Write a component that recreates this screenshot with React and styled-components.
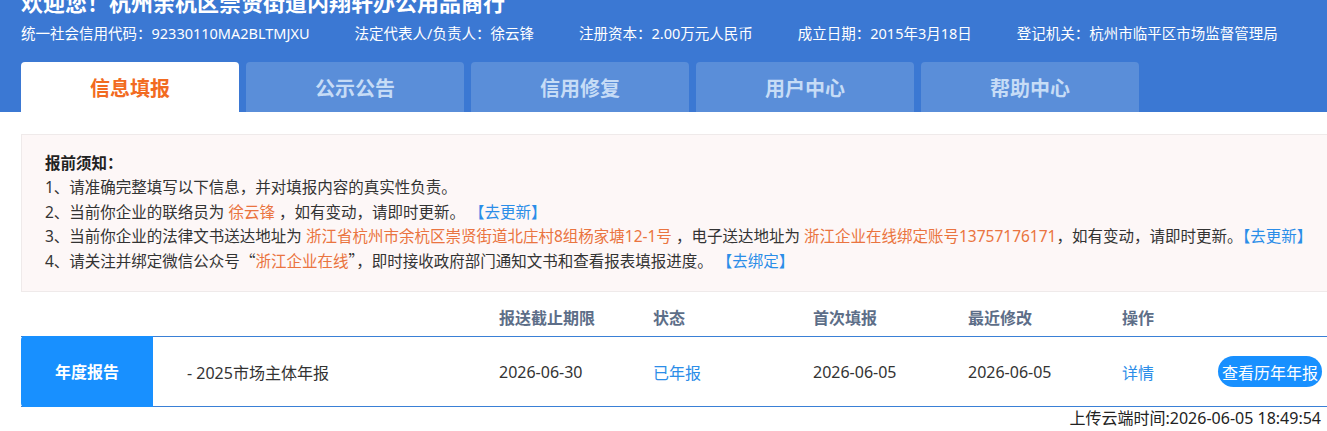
import React from 'react';
import styled, { createGlobalStyle } from 'styled-components';

const GlobalStyle = createGlobalStyle`
  html, body {
    margin: 0;
    padding: 0;
    background: #fff;
    overflow: hidden;
  }
  body {
    font-family: "Noto Sans", "Noto Sans CJK SC", sans-serif;
    font-size: 16px;
    color: #333;
  }
`;

const Header = styled.header`
  background: #3b78d3;
  padding: 0 0 0 21px;
  overflow: hidden;
`;

const Title = styled.h1`
  margin: -13px 0 0;
  font-size: 22px;
  line-height: 30px;
  font-weight: 700;
  color: #fff;
  white-space: nowrap;
`;

const InfoLine = styled.div`
  display: flex;
  gap: 45px;
  margin-top: 6px;
  line-height: 20px;
  color: #fff;
  font-size: 14.5px;
  white-space: nowrap;
`;

const Tabs = styled.nav`
  display: flex;
  gap: 7px;
  margin-top: 19px;
`;

const Tab = styled.div`
  width: 218px;
  height: 50px;
  display: flex;
  align-items: center;
  justify-content: center;
  border-radius: 4px 4px 0 0;
  font-size: 20px;
  font-weight: 700;
  background: ${p => (p.$active ? '#fff' : '#5a8ed9')};
  color: ${p => (p.$active ? '#f26b21' : '#c6dcf6')};
`;

const Main = styled.main`
  padding: 22px 0 0 21px;
`;

const Notice = styled.section`
  background: #fdf7f7;
  border: 1px solid #efeaea;
  border-right: none;
  padding: 16px 0 18px 23px;
  font-size: 15.5px;
  line-height: 24.25px;
  color: #333;
  white-space: nowrap;
`;

const NoticeTitle = styled.div`
  font-weight: 700;
  color: #222;
`;

const Hl = styled.span`
  color: #ea7440;
`;

/* full-width curly quotes, as in the CJK face */
const Quote = styled.span`
  font-family: "Noto Sans CJK SC", sans-serif;
`;

const Link = styled.a`
  color: #2b8de8;
  cursor: pointer;
`;

const Grid = styled.div`
  display: grid;
  grid-template-columns: 132px 346px 154px 160px 155px 154px 96px 1fr;
  align-items: center;
`;

const HeadRow = styled(Grid)`
  margin-top: 6px;
  height: 38px;
  font-weight: 700;
  color: #5d6e88;
`;

const BodyRow = styled(Grid)`
  box-sizing: border-box;
  height: 71px;
  border-top: 1px solid #3a80d6;
  border-bottom: 1px solid #3a80d6;
  color: #333;
`;

const Label = styled.div`
  align-self: stretch;
  margin: -1px 0;
  background: #1890ff;
  border-radius: 4px 0 0 4px;
  color: #fff;
  font-weight: 700;
  display: flex;
  align-items: center;
  justify-content: center;
  padding-bottom: 2px;
`;

const Cell = styled.div`
  color: ${p => p.$color || 'inherit'};
  padding-left: ${p => p.$pad || 0}px;
  white-space: nowrap;
`;

const PillButton = styled.button`
  width: 104px;
  height: 31px;
  border: none;
  border-radius: 16px;
  background: #1890ff;
  color: #fff;
  font: inherit;
  font-size: 16px;
  padding: 0;
  cursor: pointer;
  white-space: nowrap;
`;

const UploadTime = styled.div`
  text-align: right;
  padding-right: 6px;
  margin-top: 1px;
  line-height: 20px;
  color: #222;
`;

const info = [
  '统一社会信用代码：92330110MA2BLTMJXU',
  '法定代表人/负责人：徐云锋',
  '注册资本：2.00万元人民币',
  '成立日期：2015年3月18日',
  '登记机关：杭州市临平区市场监督管理局',
];

const tabs = ['信息填报', '公示公告', '信用修复', '用户中心', '帮助中心'];

export default function App() {
  return (
    <>
      <GlobalStyle />
      <Header>
        <Title>欢迎您！杭州余杭区崇贤街道内翔轩办公用品商行</Title>
        <InfoLine>
          {info.map(t => (
            <span key={t}>{t}</span>
          ))}
        </InfoLine>
        <Tabs>
          {tabs.map((t, i) => (
            <Tab key={t} $active={i === 0}>
              {t}
            </Tab>
          ))}
        </Tabs>
      </Header>
      <Main>
        <Notice>
          <NoticeTitle>报前须知：</NoticeTitle>
          <div>1、请准确完整填写以下信息，并对填报内容的真实性负责。</div>
          <div>
            2、当前你企业的联络员为 <Hl>徐云锋</Hl> ，如有变动，请即时更新。 <Link>【去更新】</Link>
          </div>
          <div>
            3、当前你企业的法律文书送达地址为 <Hl>浙江省杭州市余杭区崇贤街道北庄村8组杨家塘12-1号</Hl> ，电子送达地址为{' '}
            <Hl>浙江企业在线绑定账号13757176171</Hl>，如有变动，请即时更新。<Link>【去更新】</Link>
          </div>
          <div>
            4、请关注并绑定微信公众号<Quote>“</Quote>
            <Hl>浙江企业在线</Hl>
            <Quote>”</Quote>，即时接收政府部门通知文书和查看报表填报进度。 <Link>【去绑定】</Link>
          </div>
        </Notice>
        <HeadRow>
          <div />
          <div />
          <Cell>报送截止期限</Cell>
          <Cell>状态</Cell>
          <Cell>首次填报</Cell>
          <Cell>最近修改</Cell>
          <Cell>操作</Cell>
          <div />
        </HeadRow>
        <BodyRow>
          <Label>年度报告</Label>
          <Cell $pad={34}>- 2025市场主体年报</Cell>
          <Cell>2026-06-30</Cell>
          <Cell $color="#2b8de8">已年报</Cell>
          <Cell>2026-06-05</Cell>
          <Cell>2026-06-05</Cell>
          <Cell $color="#2b8de8">详情</Cell>
          <div>
            <PillButton>查看历年年报</PillButton>
          </div>
        </BodyRow>
        <UploadTime>上传云端时间:2026-06-05 18:49:54</UploadTime>
      </Main>
    </>
  );
}
